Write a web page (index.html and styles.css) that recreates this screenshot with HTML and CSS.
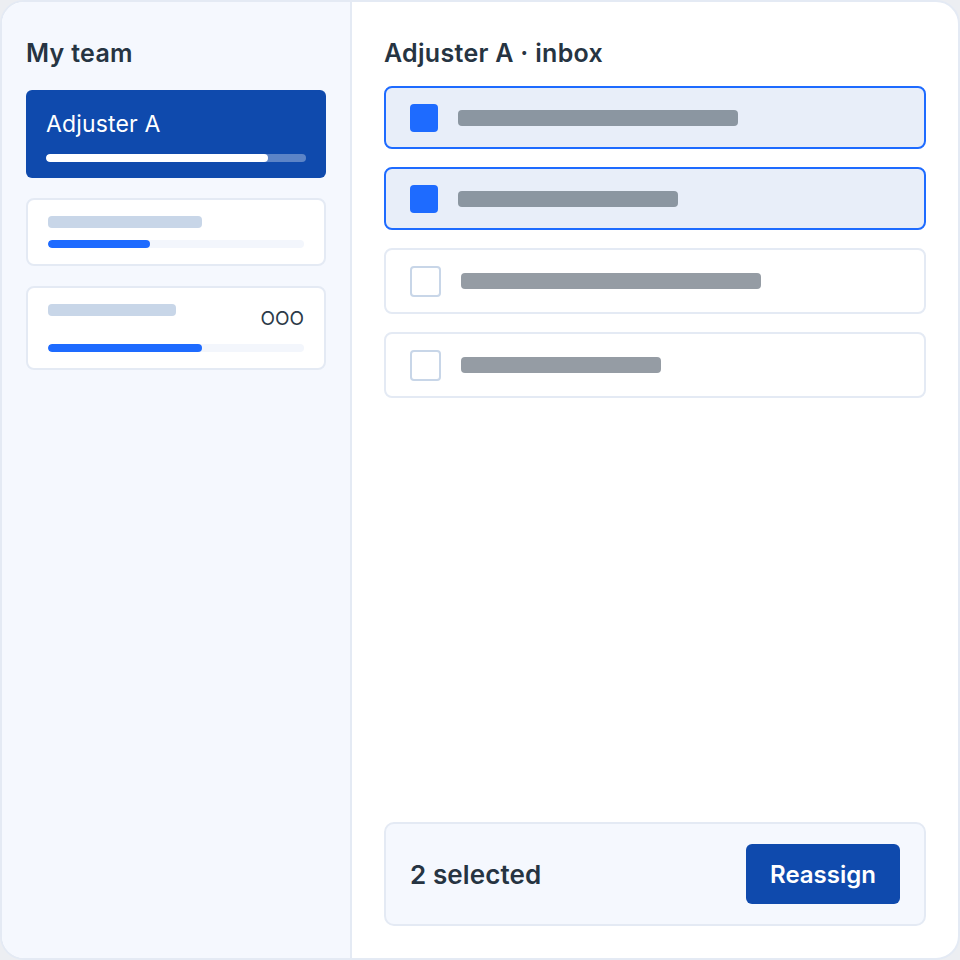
FILE: index.html
```html
<!DOCTYPE html>
<html lang="en">
<head>
<meta charset="utf-8">
<title>Team inbox</title>
<link rel="stylesheet" href="styles.css">
</head>
<body>
<div class="frame">
  <aside class="sidebar">
    <h2 class="title">My team</h2>
    <div class="member member-active">
      <div class="member-name">Adjuster A</div>
      <div class="track track-active"><div class="fill fill-active" style="width:85.4%"></div></div>
    </div>
    <div class="member">
      <div class="member-top">
        <div class="ph" style="width:154px"></div>
      </div>
      <div class="track"><div class="fill" style="width:40%"></div></div>
    </div>
    <div class="member">
      <div class="member-top member-top-tall">
        <div class="ph" style="width:128px"></div>
        <span class="ooo">OOO</span>
      </div>
      <div class="track"><div class="fill" style="width:60%"></div></div>
    </div>
  </aside>
  <main class="inbox">
    <h2 class="title">Adjuster A · inbox</h2>
    <div class="rows">
      <div class="row row-selected">
        <span class="check check-on"></span>
        <span class="line line-on" style="width:280px"></span>
      </div>
      <div class="row row-selected">
        <span class="check check-on"></span>
        <span class="line line-on" style="width:220px"></span>
      </div>
      <div class="row">
        <span class="check"></span>
        <span class="line" style="width:300px"></span>
      </div>
      <div class="row">
        <span class="check"></span>
        <span class="line" style="width:200px"></span>
      </div>
    </div>
    <div class="footer">
      <span class="count">2 selected</span>
      <button class="btn" type="button">Reassign</button>
    </div>
  </main>
</div>
</body>
</html>
```

FILE: styles.css
```css
html, body {
  margin: 0;
  padding: 0;
  background: #eceef2;
}
body {
  font-family: Inter, "Noto Sans", "Liberation Sans", sans-serif;
  color: #263442;
}
.frame {
  box-sizing: border-box;
  width: 960px;
  height: 960px;
  border: 2px solid #e4eaf4;
  border-radius: 24px;
  overflow: hidden;
  display: grid;
  grid-template-columns: 350px 1fr;
  background: #ffffff;
}
.title {
  margin: 0;
  font-size: 25px;
  line-height: 32px;
  font-weight: 600;
  color: #263442;
  letter-spacing: 0.3px;
}
.sidebar {
  box-sizing: border-box;
  background: #f5f8fe;
  border-right: 2px solid #e4eaf4;
  padding: 35px 24px 24px 24px;
  display: flex;
  flex-direction: column;
  gap: 20px;
}
.sidebar .title {
  margin-bottom: 1px;
}
.member {
  box-sizing: border-box;
  background: #ffffff;
  border: 2px solid #e4eaf4;
  border-radius: 8px;
  padding: 16px 20px;
  display: flex;
  flex-direction: column;
  gap: 12px;
}
.member-active {
  background: #0f4aad;
  border: none;
  border-radius: 6px;
  padding: 20px 20px 16px 20px;
  gap: 16px;
}
.member-name {
  color: #ffffff;
  font-size: 23px;
  line-height: 28px;
  font-weight: 400;
  letter-spacing: 0.15px;
}
.member-top {
  display: flex;
  justify-content: space-between;
  align-items: flex-start;
}
.member-top-tall {
  height: 28px;
}
.ph {
  height: 12px;
  border-radius: 4px;
  background: #c8d6e8;
}
.ooo {
  font-size: 19px;
  line-height: 28px;
  color: #2c3a48;
  margin-top: 1px;
}
.track {
  height: 8px;
  border-radius: 4px;
  background: #f3f6fc;
  overflow: hidden;
}
.track-active {
  background: rgba(255, 255, 255, 0.32);
}
.fill {
  height: 100%;
  border-radius: 4px;
  background: #1e6bff;
}
.fill-active {
  background: #ffffff;
}
.inbox {
  box-sizing: border-box;
  padding: 35px 32px 32px 32px;
  display: flex;
  flex-direction: column;
}
.rows {
  margin-top: 17px;
  display: flex;
  flex-direction: column;
  gap: 18px;
}
.row {
  box-sizing: border-box;
  border: 2px solid #e4eaf4;
  border-radius: 8px;
  background: #ffffff;
  padding: 15.5px 24px;
  display: flex;
  align-items: center;
  gap: 20px;
}
.row-selected {
  border-color: #1e6bff;
  background: #e8eef9;
}
.check {
  box-sizing: border-box;
  width: 31px;
  height: 31px;
  border: 2px solid #c8d6e8;
  border-radius: 4px;
  background: #ffffff;
  flex: none;
}
.check-on {
  width: 28px;
  height: 28px;
  border: none;
  background: #1e6bff;
}
.line {
  height: 16px;
  border-radius: 4px;
  background: #959ca4;
}
.line-on {
  background: #8b96a1;
}
.footer {
  margin-top: auto;
  box-sizing: border-box;
  height: 104px;
  border: 2px solid #e4eaf4;
  border-radius: 10px;
  background: #f5f8fe;
  padding: 0 24px;
  display: flex;
  align-items: center;
  justify-content: space-between;
}
.count {
  font-size: 26px;
  font-weight: 600;
  color: #263442;
  letter-spacing: 0.1px;
}
.btn {
  height: 60px;
  width: 154px;
  padding: 0;
  border: none;
  border-radius: 6px;
  background: #0f4aad;
  color: #ffffff;
  font-family: Inter, "Noto Sans", "Liberation Sans", sans-serif;
  font-size: 24px;
  font-weight: 600;
}
```
